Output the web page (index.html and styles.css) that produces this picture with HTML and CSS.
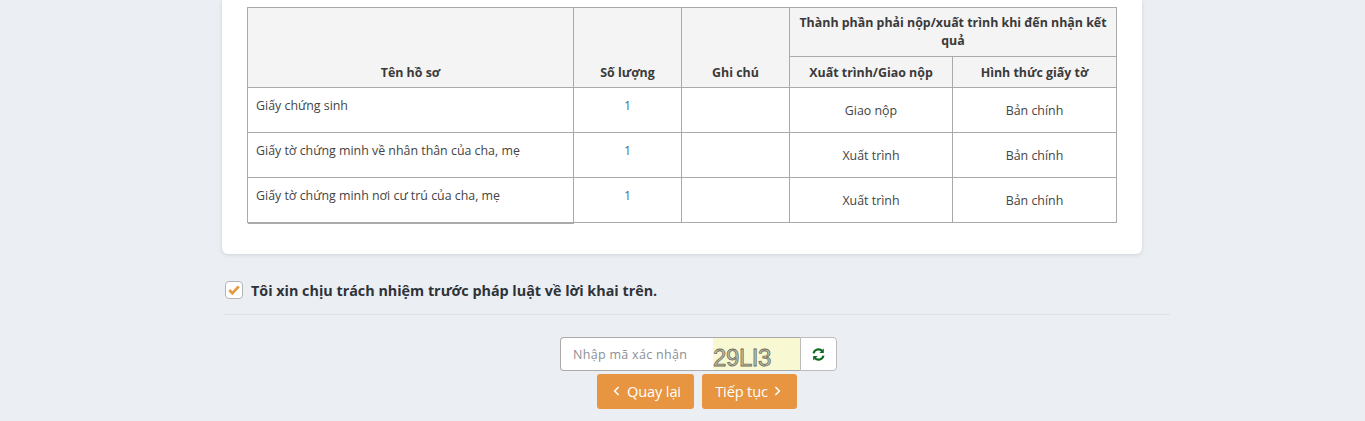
FILE: index.html
```html
<!DOCTYPE html>
<html lang="vi">

<head>
  <meta charset="UTF-8" />
  <meta name="viewport" content="width=device-width, initial-scale=1.0" />
  <title>Xác nhận hồ sơ</title>
  <link rel="stylesheet" href="styles.css">
</head>

<body>
  <div class="page">
    <div class="card">
      <table class="doc-table">
        <colgroup>
          <col class="col-name">
          <col class="col-qty">
          <col class="col-note">
          <col class="col-type">
          <col class="col-form">
        </colgroup>
        <thead>
          <tr>
            <th rowspan="2">Tên hồ sơ</th>
            <th rowspan="2">Số lượng</th>
            <th rowspan="2">Ghi chú</th>
            <th colspan="2" class="group-head">Thành phần phải nộp/xuất trình khi đến nhận kết quả</th>
          </tr>
          <tr>
            <th>Xuất trình/Giao nộp</th>
            <th>Hình thức giấy tờ</th>
          </tr>
        </thead>
        <tbody>
          <tr>
            <td class="name">Giấy chứng sinh</td>
            <td class="qty">1</td>
            <td></td>
            <td class="mid">Giao nộp</td>
            <td class="mid">Bản chính</td>
          </tr>
          <tr>
            <td class="name">Giấy tờ chứng minh về nhân thân của cha, mẹ</td>
            <td class="qty">1</td>
            <td></td>
            <td class="mid">Xuất trình</td>
            <td class="mid">Bản chính</td>
          </tr>
          <tr>
            <td class="name last">Giấy tờ chứng minh nơi cư trú của cha, mẹ</td>
            <td class="qty">1</td>
            <td></td>
            <td class="mid">Xuất trình</td>
            <td class="mid">Bản chính</td>
          </tr>
        </tbody>
      </table>
    </div>

    <label class="pledge">
      <span class="check">
        <svg width="12" height="10" viewBox="0 0 12 10"><path d="M1.2 5 4.4 8.2 10.8 1.4" fill="none" stroke="#e79a40" stroke-width="2.8"/></svg>
      </span>
      <span>Tôi xin chịu trách nhiệm trước pháp luật về lời khai trên.</span>
    </label>

    <div class="captcha-row">
      <div class="captcha">
        <input class="captcha-input" type="text" placeholder="Nhập mã xác nhận">
        <span class="captcha-code">29LI3</span>
        <button class="refresh" type="button" aria-label="Đổi mã">
          <svg width="13" height="13" viewBox="0 0 13 13">
            <path d="M1.6 5.4A5 5 0 0 1 10.2 3" fill="none" stroke="#0d6b1f" stroke-width="2.2"/>
            <path d="M11.8.6v4.4H7.4z" fill="#0d6b1f"/>
            <path d="M11.4 7.6A5 5 0 0 1 2.8 10" fill="none" stroke="#0d6b1f" stroke-width="2.2"/>
            <path d="M1.2 12.4V8h4.4z" fill="#0d6b1f"/>
          </svg>
        </button>
      </div>
    </div>

    <div class="actions">
      <button class="btn btn-back" type="button">
        <svg width="7" height="10" viewBox="0 0 7 10"><path d="M5.6 1 1.6 5l4 4" fill="none" stroke="#fff" stroke-width="1.5"/></svg>
        Quay lại
      </button>
      <button class="btn btn-next" type="button">
        Tiếp tục
        <svg width="7" height="10" viewBox="0 0 7 10"><path d="M1.4 1l4 4-4 4" fill="none" stroke="#fff" stroke-width="1.5"/></svg>
      </button>
    </div>
  </div>
</body>

</html>
```

FILE: styles.css
```css
html,
body {
  margin: 0;
  height: 421px;
  overflow: hidden;
}

body {
  background-color: #ebeef3;
  font-family: "Open Sans", "Noto Sans", sans-serif;
  color: #333;
}

.page {
  width: 946px;
  margin-left: 224px;
}

.card {
  width: 920px;
  height: 254px;
  margin-left: -2px;
  box-sizing: border-box;
  padding: 7px 25px 0;
  background-color: #fff;
  border-radius: 0 0 6px 6px;
  box-shadow: 0 1px 4px rgba(0, 0, 0, 0.12);
}

.doc-table {
  width: 869px;
  table-layout: fixed;
  border-collapse: collapse;
  font-size: 12.4px;
}

.col-name {
  width: 326px;
}

.col-qty,
.col-note {
  width: 108px;
}

.col-type {
  width: 163px;
}

.col-form {
  width: 164px;
}

.doc-table th,
.doc-table td {
  border: 1px solid #aaa;
}

.doc-table th {
  height: 31px;
  box-sizing: border-box;
  padding: 0 8px 4px;
  vertical-align: bottom;
  text-align: center;
  font-weight: 700;
  line-height: 20px;
  background-color: #f4f4f4;
  color: #3a3a3a;
}

.doc-table th.group-head {
  height: 49px;
  padding: 6px 8px;
  vertical-align: middle;
  line-height: 18px;
}

.doc-table td {
  height: 45px;
  padding: 0 8px;
  box-sizing: border-box;
  color: #444;
}

.doc-table .name {
  padding-bottom: 10px;
}

.doc-table .name.last {
  box-shadow: 0 1px 0 #aaa;
}

.doc-table .qty {
  padding-bottom: 10px;
  text-align: center;
  color: #3d6a8c;
}

.doc-table .mid {
  text-align: center;
}

.pledge {
  display: flex;
  align-items: center;
  gap: 8px;
  height: 48px;
  margin-top: 12px;
  border-bottom: 1px solid #dfe2e6;
  font-size: 14.35px;
  font-weight: 700;
  color: #2f3338;
}

.check {
  display: flex;
  align-items: center;
  justify-content: center;
  width: 16px;
  height: 16px;
  margin-left: 1px;
  border: 1px solid #b4b4b4;
  border-radius: 4px;
  background-color: #fff;
}

.captcha-row {
  display: flex;
  justify-content: center;
  margin-top: 22px;
  padding-left: 3px;
}

.captcha {
  display: flex;
  width: 277px;
  height: 34px;
}

.captcha-input {
  width: 153px;
  box-sizing: border-box;
  padding: 0 12px;
  border: 1px solid #aaa;
  border-right: none;
  border-radius: 4px 0 0 4px;
  background-color: #fff;
  font-family: inherit;
  font-size: 12.5px;
  outline: none;
}

.captcha-input::placeholder {
  color: #8a8f96;
  letter-spacing: 0.3px;
}

.captcha-code {
  width: 87px;
  box-sizing: border-box;
  padding-top: 6px;
  border-top: 1px solid #aaa;
  border-bottom: 1px solid #aaa;
  background-color: #f8f9d2;
  font-family: "Liberation Sans", sans-serif;
  font-size: 24px;
  line-height: 28px;
  letter-spacing: -0.4px;
  color: #c4c4a8;
  -webkit-text-stroke: 0.8px #6e6e5c;
}

.refresh {
  display: flex;
  align-items: center;
  justify-content: center;
  width: 37px;
  padding: 0 1px 0 0;
  border: 1px solid #bbb;
  border-radius: 0 4px 4px 0;
  background-color: #fff;
}

.actions {
  display: flex;
  justify-content: center;
  gap: 8px;
  margin-top: 3px;
  padding-right: 1px;
}

.btn {
  display: flex;
  align-items: center;
  justify-content: center;
  gap: 7px;
  height: 35px;
  padding: 0 0 2px;
  border: none;
  border-radius: 3px;
  background-color: #e79540;
  color: #fff;
  font-family: inherit;
  font-size: 14.6px;
  letter-spacing: -0.15px;
}

.btn-back {
  width: 97px;
  padding-left: 4px;
}

.btn-next {
  width: 95px;
  gap: 6px;
  padding-right: 2px;
}
```
